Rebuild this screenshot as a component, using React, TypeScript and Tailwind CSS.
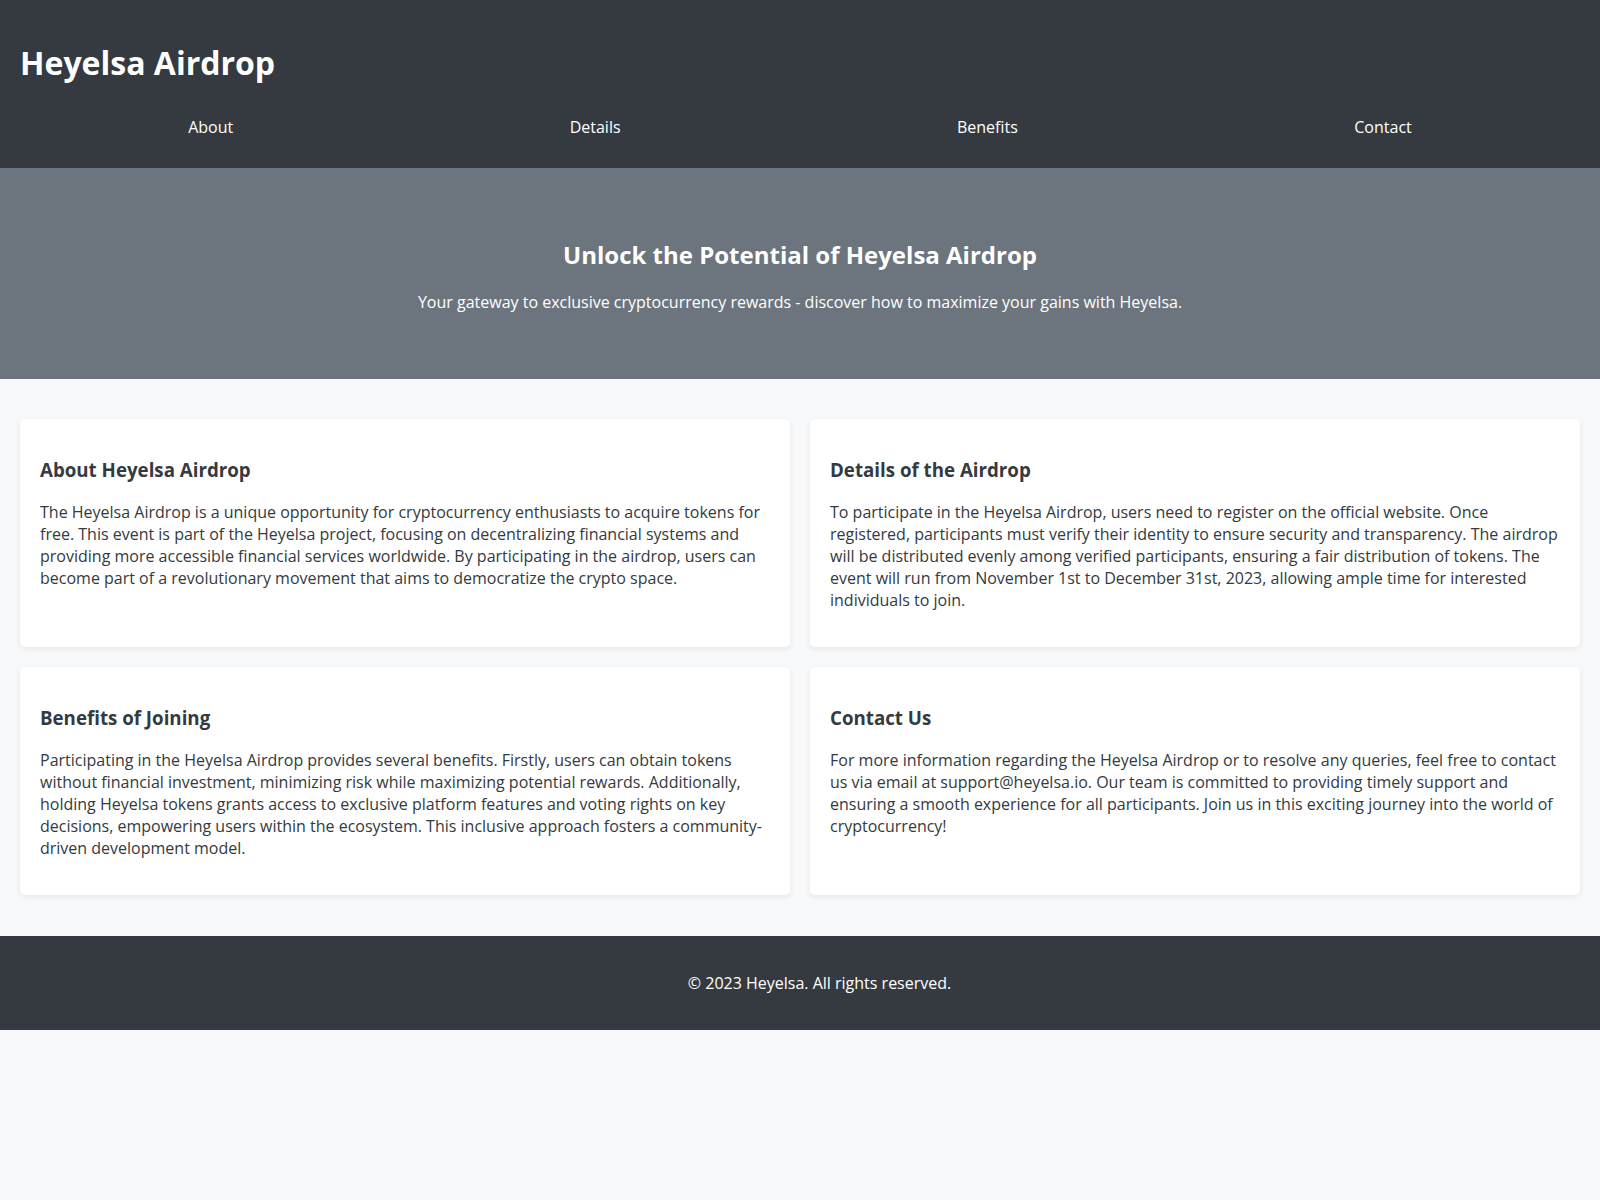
export default function App() {
  const navItems = ["About", "Details", "Benefits", "Contact"];
  const cards = [
    {
      title: "About Heyelsa Airdrop",
      body: "The Heyelsa Airdrop is a unique opportunity for cryptocurrency enthusiasts to acquire tokens for free. This event is part of the Heyelsa project, focusing on decentralizing financial systems and providing more accessible financial services worldwide. By participating in the airdrop, users can become part of a revolutionary movement that aims to democratize the crypto space.",
    },
    {
      title: "Details of the Airdrop",
      body: "To participate in the Heyelsa Airdrop, users need to register on the official website. Once registered, participants must verify their identity to ensure security and transparency. The airdrop will be distributed evenly among verified participants, ensuring a fair distribution of tokens. The event will run from November 1st to December 31st, 2023, allowing ample time for interested individuals to join.",
    },
    {
      title: "Benefits of Joining",
      body: "Participating in the Heyelsa Airdrop provides several benefits. Firstly, users can obtain tokens without financial investment, minimizing risk while maximizing potential rewards. Additionally, holding Heyelsa tokens grants access to exclusive platform features and voting rights on key decisions, empowering users within the ecosystem. This inclusive approach fosters a community-driven development model.",
    },
    {
      title: "Contact Us",
      body: "For more information regarding the Heyelsa Airdrop or to resolve any queries, feel free to contact us via email at support@heyelsa.io. Our team is committed to providing timely support and ensuring a smooth experience for all participants. Join us in this exciting journey into the world of cryptocurrency!",
    },
  ];

  return (
    <div className="min-h-[1200px] bg-[#f8f9fa] font-['Open_Sans',sans-serif] text-[#343a40]">
      <header className="h-[168px] bg-[#343a40] px-5 pt-[41px] text-white">
        <h1 className="text-[32px] font-bold leading-[44px]">Heyelsa Airdrop</h1>
        <nav className="mt-[30px] flex justify-around">
          {navItems.map((item) => (
            <a key={item} href="#" className="text-base leading-6 text-white">
              {item}
            </a>
          ))}
        </nav>
      </header>

      <section className="flex h-[211px] flex-col items-center bg-[#6c757d] pt-[71px] text-white">
        <h2 className="text-2xl font-bold leading-8">Unlock the Potential of Heyelsa Airdrop</h2>
        <p className="mt-[19px] text-base leading-6">
          Your gateway to exclusive cryptocurrency rewards - discover how to maximize your gains with Heyelsa.
        </p>
      </section>

      <main className="grid grid-cols-2 gap-5 px-5 pt-10 pb-[41px]">
        {cards.map((card) => (
          <div
            key={card.title}
            className="rounded-[5px] bg-white p-5 shadow-[0_2px_6px_rgba(0,0,0,0.08)]"
          >
            <h3 className="mt-[17px] text-[18.72px] font-bold leading-7 text-[#343a40]">{card.title}</h3>
            <p className="mt-[17px] mb-4 text-base leading-[22px] text-[#343a40]">{card.body}</p>
          </div>
        ))}
      </main>

      <footer className="flex h-[94px] items-center justify-center bg-[#343a40] pl-[39px] text-white">
        <p className="text-base leading-6">© 2023 Heyelsa. All rights reserved.</p>
      </footer>
    </div>
  );
}
